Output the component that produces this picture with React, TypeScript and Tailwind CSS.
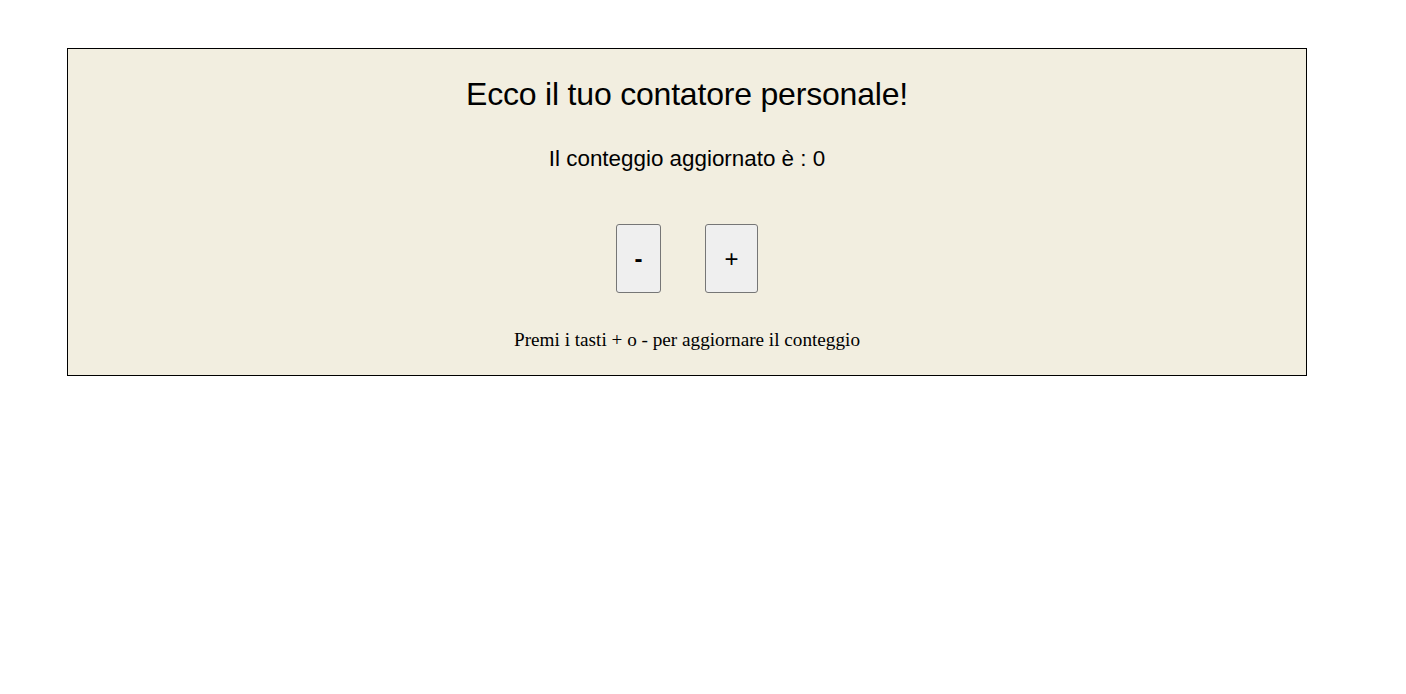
export default function App() {
  return (
    <div className="min-h-screen bg-white pt-[48px] pl-[67px]">
      <div className="w-[1240px] h-[328px] border border-black bg-[#f2eee0] flex flex-col items-center">
        <h1 className="mt-[27px] text-[32px] leading-[37px] text-black font-['Liberation_Sans',Arial,sans-serif] tracking-[-0.2px]">
          Ecco il tuo contatore personale!
        </h1>
        <p className="mt-[33px] text-[22.4px] leading-[25px] text-black font-['Liberation_Sans',Arial,sans-serif]">
          Il conteggio aggiornato è : 0
        </p>
        <div className="mt-[53px] flex gap-[44px]">
          <button className="w-[45px] h-[69px] rounded-[3px] border border-[#767676] bg-[#efefef] text-[24px] font-bold text-black font-['Liberation_Sans',Arial,sans-serif]">
            -
          </button>
          <button className="w-[53px] h-[69px] rounded-[3px] border border-[#767676] bg-[#efefef] text-[24px] text-black font-['Liberation_Sans',Arial,sans-serif]">
            +
          </button>
        </div>
        <p className="mt-[36px] text-[19.2px] leading-[22px] text-black font-['Liberation_Serif','Times_New_Roman',serif]">
          Premi i tasti + o - per aggiornare il conteggio
        </p>
      </div>
    </div>
  );
}
